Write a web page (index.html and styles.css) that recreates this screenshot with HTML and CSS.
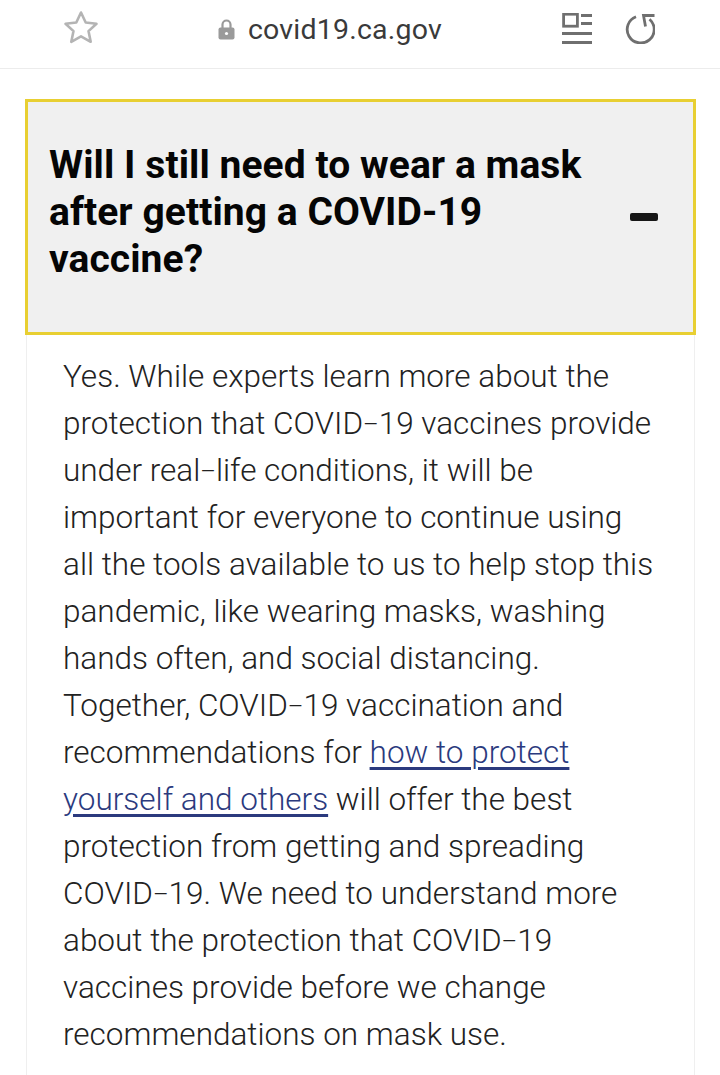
FILE: index.html
```html
<!DOCTYPE html>
<html lang="en">
<head>
<meta charset="utf-8">
<title>covid19.ca.gov</title>
<link rel="stylesheet" href="styles.css">
</head>
<body>
<header class="bar">
  <svg class="icon star" width="36" height="36" viewBox="0 0 36 36"><path d="M18 2.500l4.700 10 10.800 1.300-8 7.300 2.200 10.700-9.700-5.400-9.700 5.400 2.200-10.700-8-7.300 10.800-1.300z" fill="none" stroke="#b4b4b4" stroke-width="2.600" stroke-linejoin="round"/></svg>
  <div class="address">
    <svg class="lock" width="17" height="21" viewBox="0 0 17 21"><path d="M4.500 10V5.500a4 4 0 0 1 8 0V10" fill="none" stroke="#9a9a9a" stroke-width="2.200"/><rect x="0.500" y="8.500" width="16" height="12" rx="2" fill="#9a9a9a"/><circle cx="8.500" cy="14.500" r="1.600" fill="#fff"/></svg>
    <span class="url">covid19.ca.gov</span>
  </div>
  <div class="tools">
    <svg class="icon" width="30" height="31" viewBox="0 0 30 31"><g fill="none" stroke="#6f6f6f"><rect x="1.600" y="1.200" width="13.800" height="12" stroke-width="2.800"/><path d="M19 2.500h11M19 10.500h11M0 20.500h30M0 29.500h30" stroke-width="3"/></g></svg>
    <svg class="icon" width="30" height="31" viewBox="0 0 30 31"><g fill="none" stroke="#6f6f6f" stroke-width="2.800"><path d="M11 3.800A13.500 13.500 0 1 0 24.500 6.200"/><path d="M29.500 2.500H18.500l2 11"/></g></svg>
  </div>
</header>
<main class="page">
  <section class="accordion">
    <div class="question">
      <h2 class="title">Will I still need to wear a mask after getting a COVID-19 vaccine?</h2>
      <span class="minus"></span>
    </div>
    <div class="answer">
      <p class="text">Yes. While experts learn more about the protection that COVID<span class="dash">–</span>19 vaccines provide under real<span class="dash">–</span>life conditions, it will be important for everyone to continue using all the tools available to us to help stop this pandemic, like wearing masks, washing hands often, and social distancing. Together, COVID<span class="dash">–</span>19 vaccination and recommendations for <a class="link" href="#">how to protect yourself and others</a> will offer the best protection from getting and spreading COVID<span class="dash">–</span>19. We need to understand more about the protection that COVID<span class="dash">–</span>19 vaccines provide before we change recommendations on mask use.</p>
    </div>
  </section>
</main>
</body>
</html>
```

FILE: styles.css
```css
html, body {
  margin: 0;
  padding: 0;
  height: 1075px;
  overflow: hidden;
  background: #fff;
  font-family: Roboto, "Liberation Sans", sans-serif;
}
.bar {
  height: 68px;
  border-bottom: 1px solid #ececec;
  display: flex;
  align-items: center;
  padding: 0 65px 0 63px;
  position: relative;
}
.icon { display: block; flex: none; }
.star { margin-top: -12px; }
.address {
  display: flex;
  align-items: center;
  gap: 13px;
  margin-left: 119px;
  margin-top: -9px;
}
.url {
  font-size: 28.500px;
  line-height: 36px;
  color: #3a3a3a;
  letter-spacing: 0.200px;
}
.tools {
  display: flex;
  align-items: center;
  gap: 33px;
  margin-left: auto;
  margin-top: -11px;
}
.page { padding: 30px 24px 0 25px; }
.accordion { width: 671px; }
.question {
  height: 236px;
  box-sizing: border-box;
  background: #f0f0f0;
  border: 3px solid #e8cf32;
  padding: 0 35px 0 21px;
  display: flex;
  align-items: center;
  justify-content: space-between;
}
.title {
  margin: 0 0 10px;
  width: 550px;
  font-size: 39px;
  line-height: 47px;
  font-weight: 700;
  color: #050505;
  letter-spacing: 0.060px;
}
.minus {
  width: 28px;
  height: 8px;
  border-radius: 2px;
  background: #161616;
  flex: none;
}
.answer {
  margin: 0 1px;
  border-left: 1px solid #efefef;
  border-right: 1px solid #efefef;
  padding: 18px 36px 40px;
}
.text {
  margin: 0;
  font-size: 31.500px;
  line-height: 47px;
  font-weight: 300;
  color: #222;
}
.dash {
  font-size: 24px;
  line-height: 1;
  vertical-align: 2px;
}
.link {
  color: #2b3a7e;
  text-decoration: underline;
  text-decoration-thickness: 3px;
  text-underline-offset: 4px;
}
```
